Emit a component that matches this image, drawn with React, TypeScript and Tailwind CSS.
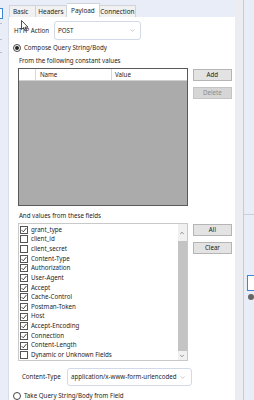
import { ChevronDown, ChevronUp } from "lucide-react";

const fields: [string, boolean][] = [
  ["grant_type", true],
  ["client_id", false],
  ["client_secret", false],
  ["Content-Type", true],
  ["Authorization", true],
  ["User-Agent", true],
  ["Accept", true],
  ["Cache-Control", true],
  ["Postman-Token", true],
  ["Host", true],
  ["Accept-Encoding", true],
  ["Connection", true],
  ["Content-Length", true],
  ["Dynamic or Unknown Fields", false],
];

function Check({ on }: { on: boolean }) {
  return (
    <span className="w-[8px] h-[8px] border border-[#555] bg-white flex items-center justify-center shrink-0">
      {on && (
        <svg width="6" height="6" viewBox="0 0 6 6">
          <path d="M0.6 3.1 L2.3 4.8 L5.4 1" stroke="#333" strokeWidth="0.9" fill="none" />
        </svg>
      )}
    </span>
  );
}

function Radio({ on }: { on: boolean }) {
  return (
    <span className="w-[8px] h-[8px] rounded-full border border-[#444] bg-white flex items-center justify-center shrink-0">
      {on && <span className="w-[4px] h-[4px] rounded-full bg-[#222]" />}
    </span>
  );
}

function Btn({ label, disabled }: { label: string; disabled?: boolean }) {
  return (
    <button
      type="button"
      className={`w-[39px] h-[12px] border flex items-center justify-center text-[6.2px] leading-none ${
        disabled
          ? "bg-[#d6d6d6] border-[#c4c4c4] text-[#8a8a8a]"
          : "bg-[#e3e3e3] border-[#b5b5b5] text-[#222]"
      }`}
    >
      {label}
    </button>
  );
}

export default function App() {
  return (
    <div className="w-[254px] h-[400px] overflow-hidden bg-[#e9edf7] flex relative font-['Noto_Sans','Open_Sans',sans-serif] text-[6.2px] whitespace-nowrap text-[#1e1e1e]">
      {/* left strip */}
      <div className="w-[8px] flex flex-col items-start">
        <div className="mt-[8px] w-[3px] h-[11px] border border-l-0 border-[#3d86d6] bg-white" />
        <div className="mt-[4px] w-[2px] h-[1px] bg-[#b8bccb]" />
        <div className="mt-[15px] w-[2px] h-[1px] bg-[#b8bccb]" />
        <div className="mt-[12px] w-[2px] h-[1px] bg-[#b8bccb]" />
      </div>

      {/* main column */}
      <div className="w-[230px] flex flex-col">
        <div className="h-[18px] flex items-end pl-[1px] text-[6.4px]">
          <div className="h-[12px] px-[3px] w-[27px] border border-b-0 border-[#cfd3dc] bg-[#f1f1f1] flex items-center">Basic</div>
          <div className="h-[12px] w-[31px] border border-b-0 border-l-0 border-[#cfd3dc] bg-[#f1f1f1] flex items-center justify-center">Headers</div>
          <div className="h-[14px] w-[33px] border border-b-0 border-l-0 border-[#cfd3dc] bg-white flex items-center justify-center">Payload</div>
          <div className="h-[12px] w-[36px] border border-b-0 border-l-0 border-[#cfd3dc] bg-[#f1f1f1] flex items-center justify-center">Connection</div>
        </div>

        <div className="flex-1 bg-white border-l border-[#d8dce6] flex flex-col">
          <div className="mt-[4px] h-[19px] flex items-center pl-[5px]">
            <span className="w-[40px]">HTTP Action</span>
            <div className="w-[87px] h-[19px] border border-[#d2d9e8] rounded-[3px] flex items-center justify-between pl-[3px] pr-[4px]">
              <span>POST</span>
              <ChevronDown size={7} color="#7a8aa8" strokeWidth={1.5} />
            </div>
          </div>

          <div className="mt-[4px] h-[8px] flex items-center gap-[3px] pl-[4px]">
            <Radio on />
            <span>Compose Query String/Body</span>
          </div>

          <div className="mt-[5px] h-[8px] flex items-center pl-[10px]">From the following constant values</div>

          <div className="mt-[3px] flex pl-[9px]">
            <div className="w-[170px] h-[138px] border border-[#5a5a5a] bg-[#ababab] flex flex-col">
              <div className="h-[12px] bg-white border-b border-[#d0d0d0] flex">
                <div className="w-[17px] border-r border-[#d8d8d8]" />
                <div className="w-[76px] border-r border-[#d8d8d8] pl-[4px] flex items-center">Name</div>
                <div className="flex-1 pl-[3px] flex items-center">Value</div>
              </div>
            </div>
            <div className="ml-[5px] flex flex-col gap-[6px] pt-[1px]">
              <Btn label="Add" />
              <Btn label="Delete" disabled />
            </div>
          </div>

          <div className="mt-[6px] h-[8px] flex items-center pl-[10px]">And values from these fields</div>

          <div className="mt-[3px] flex pl-[9px]">
            <div className="w-[170px] h-[138px] border border-[#c9c9c9] bg-white flex">
              <div className="flex-1 flex flex-col pt-[1px] pl-[1px]">
                {fields.map(([name, on]) => (
                  <div key={name} className="h-[9.7px] flex items-center gap-[3px]">
                    <Check on={on} />
                    <span className="leading-none">{name}</span>
                  </div>
                ))}
              </div>
              <div className="w-[9px] bg-[#f0f0f0] flex flex-col items-center">
                <div className="h-[17px] flex items-center">
                  <ChevronUp size={6} color="#555" strokeWidth={2.5} />
                </div>
                <div className="w-[9px] flex-1 bg-[#c4c4c4]" />
                <div className="h-[9px] flex items-center">
                  <ChevronDown size={6} color="#555" strokeWidth={2.5} />
                </div>
              </div>
            </div>
            <div className="ml-[5px] flex flex-col gap-[6px] pt-[1px]">
              <Btn label="All" />
              <Btn label="Clear" />
            </div>
          </div>

          <div className="mt-[7px] h-[18px] flex items-center pl-[13px]">
            <span className="w-[45px]">Content-Type</span>
            <div className="w-[125px] h-[18px] border border-[#d2d9e8] rounded-[3px] flex items-center justify-between pl-[3px] pr-[5px] overflow-hidden">
              <span>application/x-www-form-urlencoded</span>
              <ChevronDown size={7} color="#7a8aa8" strokeWidth={1.5} />
            </div>
          </div>

          <div className="mt-[6px] h-[8px] flex items-center gap-[3px] pl-[4px]">
            <Radio on={false} />
            <span>Take Query String/Body from Field</span>
          </div>
        </div>
      </div>

      {/* right edge */}
      <div className="w-[8px] bg-[#ecedf1]" />
      <div className="w-[1px] bg-[#c3cbe0]" />
      <div className="flex-1 flex flex-col">
        <div className="h-[214px]" />
        <div className="h-[1px] bg-[#c8cfdf]" />
        <div className="mt-[60px] ml-[3px] h-[16px] border border-r-0 border-[#3d86d6] bg-white" />
        <div className="mt-[3px] ml-[4px] w-[6px] h-[6px] rounded-full bg-[#666]" />
      </div>

      {/* mouse cursor */}
      <svg className="absolute left-[21px] top-[20px]" width="8" height="12" viewBox="0 0 8 12">
        <path d="M0.5 0.5 L0.5 9.5 L2.6 7.6 L4 11 L5.3 10.4 L4 7.2 L7 7.2 Z" fill="white" stroke="#222" strokeWidth="0.8" />
      </svg>
    </div>
  );
}
